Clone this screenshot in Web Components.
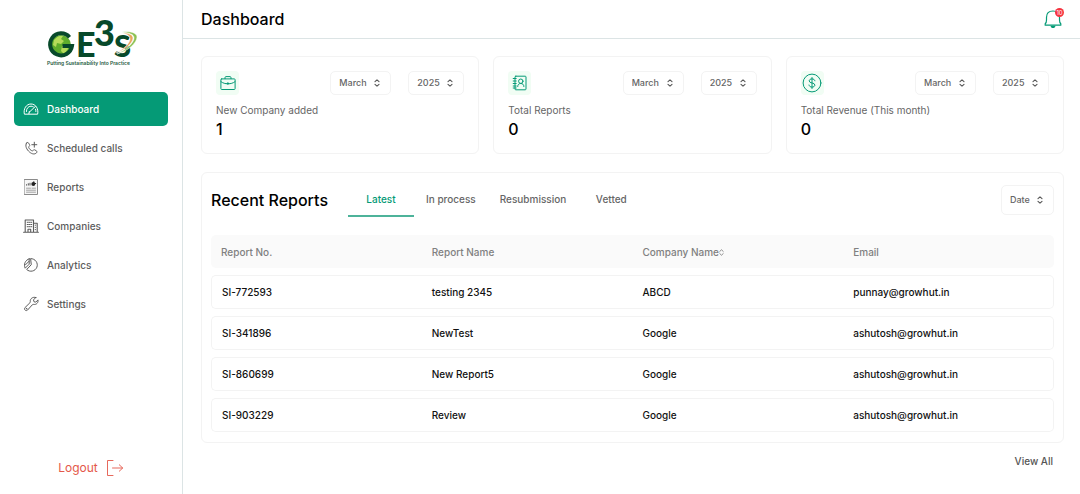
<!DOCTYPE html>
<html lang="en">
<head>
<meta charset="utf-8">
<meta name="viewport" content="width=device-width, initial-scale=1">
<title>Dashboard</title>
<style>
  body {
    margin: 0;
    background: #fff;
    color: #111;
    font-family: Inter, "Liberation Sans", sans-serif;
    font-size: 10px;
    line-height: 16px;
    --green: #059a76;
    --line: #f3f3f3;
    --rule: #dce4e5;
    --muted: #666;
  }
</style>
</head>
<body>
<ge-app>
  <ge-sidebar slot="side">
    <ge-nav-item icon="gauge" active>Dashboard</ge-nav-item>
    <ge-nav-item icon="phone">Scheduled calls</ge-nav-item>
    <ge-nav-item icon="report">Reports</ge-nav-item>
    <ge-nav-item icon="building">Companies</ge-nav-item>
    <ge-nav-item icon="pie">Analytics</ge-nav-item>
    <ge-nav-item icon="wrench">Settings</ge-nav-item>
  </ge-sidebar>
  <ge-topbar slot="top" count="10">Dashboard</ge-topbar>
  <ge-stat slot="stats" icon="briefcase" value="1">New Company added</ge-stat>
  <ge-stat slot="stats" icon="contacts" value="0">Total Reports</ge-stat>
  <ge-stat slot="stats" icon="dollar" value="0">Total Revenue (This month)</ge-stat>
  <ge-reports>Recent Reports</ge-reports>
</ge-app>

<script>
const define = (name, html, setup) => {
  const tpl = document.createElement('template');
  customElements.define(name, class extends HTMLElement {
    connectedCallback() {
      if (this.shadowRoot) return;
      tpl.innerHTML = typeof html === 'function' ? html(this) : html;
      const root = this.attachShadow({ mode: 'open' });
      root.append(tpl.content.cloneNode(true));
      if (setup) setup(root, this);
    }
  });
};

const ICONS = {
  gauge: [16, 12, `<path d="M1.3 10.8C.2 5.8 3.300 1 8 1s7.800 4.800 6.700 9.800z"/><path d="M3.400 8.500C3.300 5.500 5.300 3.200 8 3.200c.9 0 1.600.2 2.300.6M12.500 6.200c.3.700.5 1.500.4 2.300M6.500 9l5.900-5.600M6.300 8.500l-.4 2.200"/>`],
  phone: [14, 14, `<path d="M2.600 2c.8-.8 1.500-.7 2 .1l.9 1.600c.4.700.2 1.200-.4 1.700-.6.500-.5 1 0 1.900.6 1 1.400 1.700 2.300 2.200.9.500 1.400.4 1.900-.2.500-.6 1-.7 1.700-.3l1.300.8c.9.600.9 1.300.2 2-1.700 1.800-4.400 1.400-6.900-.7C2.700 8.700.6 4.700 2.600 2zM10.300 1.200v5M7.800 3.700h5"/>`],
  report: [14, 16, `<path d="M.5.5h13v15H.5z" fill="#f6f6f6" stroke="#8b8b8b"/><path d="M2.500 6.500V5.300M4.300 6.500V4.300M6 6.500V3.800" stroke="#555" stroke-linecap="butt"/><circle cx="9.300" cy="5" r="2" fill="#222" stroke="none"/><path d="M9.800 4.500V2.700M9.800 4.500h1.900" stroke="#222"/><path d="M2.500 9.200h4M8 9.200h3.500M2.500 11.200h9M2.500 13.200h9" stroke="#999" stroke-width=".9"/>`],
  building: [16, 14, `<path d="M.6 13.300h14.800M2.200 13V1h8.300v12M10.500 4.200h3.700V13M5 13v-2.800h2.700V13" stroke-width="1.100"/><path d="M4.200 3.300h1M6 3.300h.9M7.800 3.300h1M4.200 5.500h1M6 5.500h.9M7.800 5.500h1M4.200 7.700h1M6 7.700h.9M7.800 7.700h1M12.200 6.200h.3M12.200 8.400h.3M12.200 10.600h.3"/>`],
  pie: [16, 16, `<path d="M8 1.600A6.300 6.300 0 1 1 3.700 12.500L8 8z"/><path d="M6.200 1.800v5.400L2.200 11.200C.4 7.500 2.200 3 6.200 1.800zM6 4.300L2.300 8"/>`],
  wrench: [16, 16, `<path d="M12.800 1.500l-2.300 2.400.5 1.900 1.800.3 2.200-2.200c.5 2.700-1.600 5-4.300 4.500-.6-.1-1 0-1.400.4L4.600 14c-1.500 1.600-4.100-.4-2.700-2.300l5-4.900c.4-.4.5-.8.4-1.300C6.900 2.900 9.700.4 12.800 1.500z"/><circle cx="3.400" cy="12.700" r=".3"/>`],
  logout: [18, 18, `<path d="M7 1.500H1.500v15H7M6.500 9h10M13.300 5.800L16.700 9l-3.400 3.200" stroke-width=".9"/>`],
  briefcase: [16, 16, `<rect x=".9" y="3.900" width="14.200" height="10.600" rx=".8"/><path d="M5 3.700V2.600C5 2 5.400 1.600 6 1.600h4c.6 0 1 .4 1 1v1.100M1 6.700c2 1.500 4.300 2.100 7 2.100s5-.6 7-2.100M7.400 8h1.200v1H7.400z"/>`],
  contacts: [16, 16, `<rect x="3" y="1.200" width="11" height="13.600" rx=".8"/><path d="M1.200 3.500h3M1.200 6h3M1.200 8.500h3M1.200 11h3M1.200 13h3M5.700 11.500c0-2 1.300-3 3.100-3s3.100 1 3.100 3"/><circle cx="8.800" cy="6.200" r="2.200"/>`],
  dollar: [20, 20, `<circle cx="10" cy="10" r="8.900"/><path d="M10 4.500v11M12.900 7.800c-.2-1.200-1.300-1.900-2.900-1.900S7.200 6.600 7.200 7.900c0 2.900 5.700 1.300 5.700 4.100 0 1.300-1.300 2.100-2.900 2.100s-2.800-.8-3-2.100"/>`],
  bell: [18, 20, `<path d="M1.200 16.200v-1.400c1-.9 1.300-2 1.300-3.800V8.500C2.500 4.600 5 2 9 2s6.500 2.600 6.500 6.500V11c0 1.800.3 2.900 1.300 3.800v1.400z" stroke-width="1.200"/><path d="M6.500 16.800h5c-.2 1.500-1.200 2.300-2.500 2.300s-2.300-.8-2.500-2.300z" fill="currentColor" stroke="none"/>`],
  updown: [6, 8, `<path d="M1 2.700L3 .9l2 1.800M1 5.300l2 1.800 2-1.800" stroke-width="1.100"/>`],
  sort: [5, 7, `<path d="M.8 2.400L2.500.8l1.700 1.600M.8 4.600l1.700 1.600 1.700-1.600" stroke-width=".9"/>`]
};

define('ge-icon', el => {
  const [w, h, body] = ICONS[el.getAttribute('name')];
  return `<style>
    :host { display: inline-flex; flex: none; }
    svg { display: block; }
  </style>
  <svg width="${w}" height="${h}" viewBox="0 0 ${w} ${h}" fill="none" stroke="currentColor"
    stroke-width="1" stroke-linecap="round" stroke-linejoin="round" aria-hidden="true">${body}</svg>`;
});

define('ge-logo', `
  <style>
    :host { display: block; }
    svg { display: block; margin: 0 auto; overflow: visible; }
    .mark { font-family: Lato, sans-serif; font-weight: 900; fill: #07492a; }
    .tag { font-size: 5px; font-weight: 600; fill: #1d5a40; }
  </style>
  <svg width="92" height="50" viewBox="0 0 92 50" role="img" aria-label="GE3S">
    <circle cx="16" cy="26" r="10" fill="#5fae2c"/>
    <path d="M9 21c3-4 7-5 9-4l-2 3 3 2-3 3-4-1-1 4-3-2zM17 27l5-1 1 4-4 5-3-3z" fill="#b5dc5a"/>
    <path d="M24.500 18.200A11 11 0 1 0 27 27H17.500" fill="none" stroke="#07492a" stroke-width="4"/>
    <text class="mark" x="31" y="38" font-size="34">E</text>
    <text class="mark" x="49" y="27" font-size="36">3</text>
    <text class="mark" x="69" y="38" font-size="31">S</text>
    <path d="M77 13c9-1 15 1 15 5 0 6-9 14-20 17 9-4 17-11 17-16 0-4-5-5-12-6z" fill="#8cc152" stroke="#fff" stroke-width=".5"/>
    <path d="M78 14c6 0 10 2 10 5 0 5-8 12-17 15 8-4 14-10 14-14 0-3-3-5-7-6z" fill="#eaa55c" stroke="#fff" stroke-width=".5"/>
    <text class="tag" x="2" y="46">Putting Sustainability Into Practice</text>
  </svg>`);

define('ge-nav-item', el => `
  <style>
    :host { display: block; }
    a {
      display: grid; grid-template-columns: 16px 1fr; column-gap: 8px; align-items: center;
      height: 34px; padding: 0 9px; border-radius: 5px;
      color: #5c5c5c; font-weight: 500; text-decoration: none;
    }
    ge-icon { justify-self: center; }
    a.on { background: var(--green); color: #fff; }
  </style>
  <a href="#" class="${el.hasAttribute('active') ? 'on' : ''}">
    <ge-icon name="${el.getAttribute('icon')}"></ge-icon><span><slot></slot></span>
  </a>`);

define('ge-sidebar', `
  <style>
    :host {
      display: flex; flex-direction: column; box-sizing: border-box;
      padding: 19px 14px 17px; border-right: 1px solid var(--rule);
    }
    nav { display: flex; flex-direction: column; gap: 5px; margin-top: 23px; }
    .out {
      display: flex; align-items: center; gap: 8px; align-self: center;
      margin-top: auto; color: #e4584a; font-size: 12px; text-decoration: none;
    }
  </style>
  <ge-logo></ge-logo>
  <nav><slot></slot></nav>
  <a class="out" href="#">Logout <ge-icon name="logout"></ge-icon></a>`);

define('ge-topbar', el => `
  <style>
    :host {
      display: flex; align-items: center; justify-content: space-between;
      height: 38px; padding: 0 18px 0 18px; border-bottom: 1px solid var(--rule);
    }
    h1 { margin: 0; font-size: 16px; font-weight: 500; line-height: 20px; color: #000; }
    button {
      position: relative; display: flex; padding: 0; border: 0;
      background: none; color: var(--green); font: inherit;
    }
    .count {
      position: absolute; top: -1px; right: -2px; width: 9px; height: 9px;
      border-radius: 50%; background: #f5333f; color: #fff;
      font-size: 6px; line-height: 9px; text-align: center;
    }
  </style>
  <h1><slot></slot></h1>
  <button type="button" aria-label="Notifications">
    <ge-icon name="bell"></ge-icon><span class="count">${el.getAttribute('count')}</span>
  </button>`);

define('ge-select', el => `
  <style>
    :host { display: inline-grid; align-items: center; height: 24px; }
    select, ge-icon { grid-area: 1 / 1; }
    select {
      appearance: none; box-sizing: border-box; width: 100%; height: 100%; margin: 0;
      padding: 0 23px 0 8px; border: 1px solid var(--line); border-radius: 5px;
      background: #fff; color: var(--muted);
      font: 500 9px/16px Inter, sans-serif;
    }
    ge-icon { justify-self: end; margin-right: 11px; color: #555; pointer-events: none; }
  </style>
  <select aria-label="${el.getAttribute('label')}">
    ${el.getAttribute('options').split(',').map(o => `<option>${o}</option>`).join('')}
  </select>
  <ge-icon name="updown"></ge-icon>`);

define('ge-stat', el => `
  <style>
    :host { display: block; padding: 14px; border: 1px solid var(--line); border-radius: 6px; }
    .head { display: flex; align-items: center; }
    .badge {
      display: grid; place-items: center; width: 23px; height: 24px; margin-right: auto;
      border-radius: 4px; background: #f1fdf4; color: var(--green);
    }
    .year { margin-left: 17px; }
    .label { margin: 7px 0 0; color: var(--muted); }
    .value { margin: 1px 0 0; font-size: 16px; line-height: 20px; font-weight: 500; color: #000; }
  </style>
  <div class="head">
    <span class="badge"><ge-icon name="${el.getAttribute('icon')}"></ge-icon></span>
    <ge-select label="Month" options="March"></ge-select>
    <ge-select class="year" label="Year" options="2025"></ge-select>
  </div>
  <p class="label"><slot></slot></p>
  <p class="value">${el.getAttribute('value')}</p>`);

const REPORTS = [
  ['SI-772593', 'testing 2345', 'ABCD', 'punnay@growhut.in'],
  ['SI-341896', 'NewTest', 'Google', 'ashutosh@growhut.in'],
  ['SI-860699', 'New Report5', 'Google', 'ashutosh@growhut.in'],
  ['SI-903229', 'Review', 'Google', 'ashutosh@growhut.in']
];

define('ge-reports', `
  <style>
    :host { display: block; }
    .card { padding: 9px 9px 3px; border: 1px solid var(--line); border-radius: 6px; }
    .head { display: flex; align-items: center; height: 35px; }
    h2 { margin: 0 20px 0 0; font-size: 16px; font-weight: 500; line-height: 20px; color: #000; }
    .tabs { display: flex; align-self: stretch; margin-right: auto; }
    .tabs button {
      min-width: 66px; padding: 0 12px; border: 0; border-bottom: 2px solid transparent;
      background: none; color: var(--muted); font: 500 10px/16px Inter, sans-serif;
    }
    .tabs button[aria-selected=true] { color: var(--green); border-bottom-color: #4db39a; }
    .date { height: 30px; }
    table {
      width: 100%; margin-top: 11px; table-layout: fixed;
      border-collapse: separate; border-spacing: 0 7px;
    }
    th, td { box-sizing: border-box; padding: 0 0 0 10px; text-align: left; font-weight: 500; }
    th { height: 33px; background: #fafafa; color: #808080; }
    td { height: 34px; border: solid var(--line); border-width: 1px 0; }
    td:first-child { border-left-width: 1px; }
    td:last-child { border-right-width: 1px; }
    th:first-child, td:first-child { border-radius: 5px 0 0 5px; }
    th:last-child, td:last-child { border-radius: 0 5px 5px 0; }
    .all { display: flex; justify-content: flex-end; padding: 10px 11px 0 0; }
    .all a { color: #555; font-weight: 500; text-decoration: none; }
  </style>
  <section class="card">
    <div class="head">
      <h2><slot></slot></h2>
      <div class="tabs" role="tablist">
        <button type="button" role="tab" aria-selected="true">Latest</button>
        <button type="button" role="tab" aria-selected="false">In process</button>
        <button type="button" role="tab" aria-selected="false">Resubmission</button>
        <button type="button" role="tab" aria-selected="false">Vetted</button>
      </div>
      <ge-select class="date" label="Sort by" options="Date"></ge-select>
    </div>
    <table>
      <thead><tr>
        <th scope="col">Report No.</th>
        <th scope="col">Report Name</th>
        <th scope="col">Company Name<ge-icon name="sort"></ge-icon></th>
        <th scope="col">Email</th>
      </tr></thead>
      <tbody></tbody>
    </table>
  </section>
  <div class="all"><a href="#">View All</a></div>`,
root => {
  const body = root.querySelector('tbody');
  for (const cells of REPORTS) {
    const row = body.insertRow();
    for (const text of cells) row.insertCell().textContent = text;
  }
});

define('ge-app', `
  <style>
    :host { display: grid; grid-template-columns: 183px minmax(0, 1fr); min-height: 100vh; }
    .side { display: grid; }
    main { padding: 17px 16px 16px 18px; }
    .stats { display: grid; grid-template-columns: repeat(3, minmax(0, 1fr)); gap: 14px; margin-bottom: 18px; }
  </style>
  <div class="side"><slot name="side"></slot></div>
  <div>
    <slot name="top"></slot>
    <main>
      <div class="stats"><slot name="stats"></slot></div>
      <slot></slot>
    </main>
  </div>`);
</script>
</body>
</html>
